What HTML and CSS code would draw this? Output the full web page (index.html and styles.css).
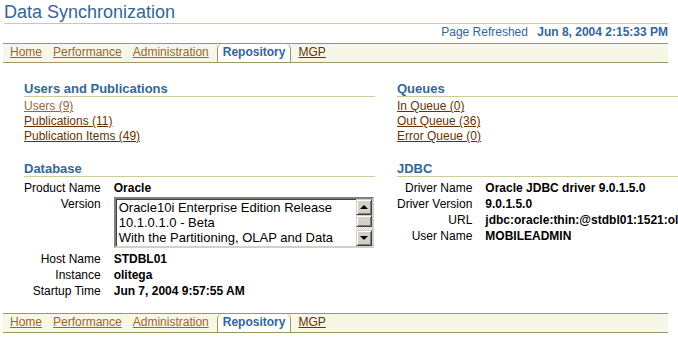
FILE: index.html
```html
<!DOCTYPE html>
<html>
    <head>
        <title>Data Synchronization</title>
        <link rel="stylesheet" href="styles.css">
    </head>
    <body>
        <div class="header">
            <h1>Data Synchronization</h1>
            <div class="refreshed">Page Refreshed <b>Jun 8, 2004 2:15:33 PM</b></div>
        </div>
        <div class="tabs">
            <a class="tab visited" href="#">Home</a>
            <a class="tab visited" href="#">Performance</a>
            <a class="tab visited" href="#">Administration</a>
            <span class="tab selected">Repository</span>
            <a class="tab" href="#">MGP</a>
        </div>
        <div class="content">
            <div class="column">
                <div class="section">
                    <h2>Users and Publications</h2>
                    <div class="links">
                        <a class="visited" href="#">Users (9)</a>
                        <a href="#">Publications (11)</a>
                        <a href="#">Publication Items (49)</a>
                    </div>
                </div>
                <div class="section">
                    <h2>Database</h2>
                    <div class="props">
                        <div class="label">Product Name</div>
                        <div class="value">Oracle</div>
                        <div class="label">Version</div>
                        <div class="value">
                            <div class="textbox">
                                <div class="text">Oracle10i Enterprise Edition Release<br>10.1.0.1.0 - Beta<br>With the Partitioning, OLAP and Data</div>
                                <div class="scrollbar">
                                    <div class="sbtn"><span class="arrow up"></span></div>
                                    <div class="thumb"></div>
                                    <div class="track"></div>
                                    <div class="sbtn"><span class="arrow down"></span></div>
                                </div>
                            </div>
                        </div>
                        <div class="label">Host Name</div>
                        <div class="value">STDBL01</div>
                        <div class="label">Instance</div>
                        <div class="value">olitega</div>
                        <div class="label">Startup Time</div>
                        <div class="value">Jun 7, 2004 9:57:55 AM</div>
                    </div>
                </div>
            </div>
            <div class="column">
                <div class="section">
                    <h2>Queues</h2>
                    <div class="links">
                        <a href="#">In Queue (0)</a>
                        <a href="#">Out Queue (36)</a>
                        <a href="#">Error Queue (0)</a>
                    </div>
                </div>
                <div class="section">
                    <h2>JDBC</h2>
                    <div class="props">
                        <div class="label">Driver Name</div>
                        <div class="value">Oracle JDBC driver 9.0.1.5.0</div>
                        <div class="label">Driver Version</div>
                        <div class="value">9.0.1.5.0</div>
                        <div class="label">URL</div>
                        <div class="value">jdbc:oracle:thin:@stdbl01:1521:olitega</div>
                        <div class="label">User Name</div>
                        <div class="value">MOBILEADMIN</div>
                    </div>
                </div>
            </div>
        </div>
        <div class="tabs bottom">
            <a class="tab visited" href="#">Home</a>
            <a class="tab visited" href="#">Performance</a>
            <a class="tab visited" href="#">Administration</a>
            <span class="tab selected">Repository</span>
            <a class="tab" href="#">MGP</a>
        </div>
    </body>
</html>
```

FILE: styles.css
```css
html, body {
    margin: 0;
    padding: 0;
    overflow: hidden;
    background: #fff;
}
body {
    font-family: "Liberation Sans", Arial, sans-serif;
    font-size: 12px;
    line-height: 15px;
    color: #000;
}
a {
    color: #663300;
}
a.visited {
    color: #996633;
}

.header {
    margin: 0 10px 0 4px;
}
.header h1 {
    margin: 0;
    padding-top: 2px;
    font-size: 18px;
    line-height: 21px;
    font-weight: normal;
    color: #336699;
    border-bottom: 1px solid #cccc99;
}
.refreshed {
    margin-top: 1px;
    text-align: right;
    color: #336699;
}
.refreshed b {
    margin-left: 6px;
}

.tabs {
    display: flex;
    height: 17px;
    margin: 3px 10px 0 3px;
    padding: 1px 0 0 7px;
    background: #f7f7e7;
    border-top: 1px solid #999966;
    border-bottom: 1px solid #999966;
}
.tabs.bottom {
    margin-top: 14px;
}
.tab {
    margin-right: 11px;
}
.tab.selected {
    margin: -1px 7px 0 -3px;
    padding: 1px 5px 0;
    background: #fff;
    border-left: 1px solid #999966;
    border-right: 1px solid #999966;
    border-radius: 5px 5px 0 0;
    font-weight: bold;
    color: #336699;
}

.content {
    display: grid;
    grid-template-columns: 351px 1fr;
    column-gap: 22px;
    margin-top: 18px;
    padding-left: 24px;
}
.section + .section {
    margin-top: 17px;
}
.section h2 {
    margin: 0;
    font-size: 13px;
    line-height: 15px;
    color: #336699;
    border-bottom: 1px solid #cccc99;
}
.links {
    padding-top: 2px;
}
.links a {
    display: block;
    width: max-content;
}

.props {
    display: grid;
    grid-template-columns: auto 1fr;
    column-gap: 13px;
    padding-top: 3px;
    line-height: 16px;
}
.props .label {
    text-align: right;
    white-space: nowrap;
}
.props .value {
    font-weight: bold;
    white-space: nowrap;
}

.textbox {
    display: flex;
    box-sizing: border-box;
    width: 260px;
    height: 51px;
    margin: 1px 0 3px;
    border: 2px solid;
    border-color: #808080 #d4d0c8 #d4d0c8 #808080;
    box-shadow: inset 1px 1px 0 #404040;
    font-weight: normal;
}
.textbox .text {
    flex: 1;
    padding: 1px 2px 0 3px;
    overflow: hidden;
    font-size: 13px;
    line-height: 15px;
}
.scrollbar {
    display: flex;
    flex-direction: column;
    width: 16px;
}
.sbtn, .thumb {
    box-sizing: border-box;
    display: flex;
    align-items: center;
    justify-content: center;
    background: #d4d0c8;
    border: 1px solid;
    border-color: #d4d0c8 #404040 #404040 #d4d0c8;
    box-shadow: inset 1px 1px 0 #fff, inset -1px -1px 0 #808080;
}
.sbtn {
    height: 16px;
}
.thumb {
    height: 12px;
}
.track {
    flex: 1;
    background: repeating-conic-gradient(#fff 0 25%, #d4d0c8 0 50%) 0 0 / 2px 2px;
}
.arrow {
    width: 0;
    height: 0;
    border-left: 4px solid transparent;
    border-right: 4px solid transparent;
}
.arrow.up {
    border-bottom: 4px solid #000;
}
.arrow.down {
    border-top: 4px solid #000;
}
```
